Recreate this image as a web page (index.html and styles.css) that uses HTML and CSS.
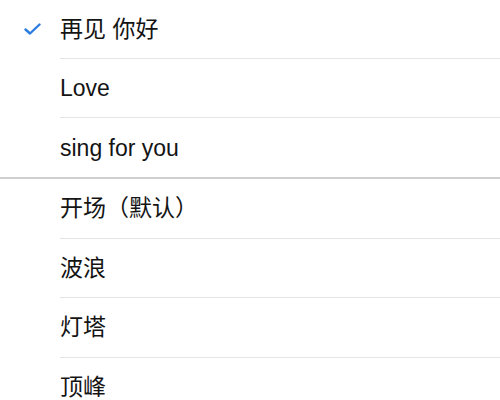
FILE: index.html
```html
<!DOCTYPE html>
<html lang="zh-CN">
<head>
  <meta charset="UTF-8" />
  <meta name="viewport" content="width=device-width, initial-scale=1.0"/>
  <title>选择音乐</title>
  <link rel="stylesheet" href="styles.css">
</head>
<body>
  <ul class="list first">
    <li class="item selected">
      <span class="check">
        <svg width="17" height="12" viewBox="0 0 17 12"><path d="M1.5 6.5 L6 10.5 L15.5 1.5" fill="none" stroke="#2b7de1" stroke-width="2.4" stroke-linecap="round" stroke-linejoin="round"/></svg>
      </span>
      <div class="row">再见 你好</div>
    </li>
    <li class="item"><div class="row">Love</div></li>
    <li class="item"><div class="row">sing for you</div></li>
  </ul>
  <ul class="list">
    <li class="item"><div class="row">开场（默认）</div></li>
    <li class="item"><div class="row">波浪</div></li>
    <li class="item"><div class="row">灯塔</div></li>
    <li class="item"><div class="row">顶峰</div></li>
  </ul>
</body>
</html>
```

FILE: styles.css
```css
body {
  margin: 0;
  padding: 0;
  background: #fff;
  font-family: "Liberation Sans", "Noto Sans CJK SC", sans-serif;
  color: #141414;
}

.list {
  list-style: none;
  margin: 0;
  padding: 0;
}

.list.first {
  border-bottom: 2px solid #cfcfd1;
}

.item {
  position: relative;
  display: flex;
  padding-left: 60px;
}

.row {
  flex: 1;
  height: 59.5px;
  display: flex;
  align-items: center;
  padding-top: 1px;
  box-sizing: border-box;
  font-size: 23px;
  line-height: 1;
  border-bottom: 1px solid #e4e4e6;
}

.first .row {
  height: 59px;
}

.item:last-child .row {
  border-bottom: none;
}

.check {
  position: absolute;
  left: 24px;
  top: 23px;
  display: flex;
}
```
